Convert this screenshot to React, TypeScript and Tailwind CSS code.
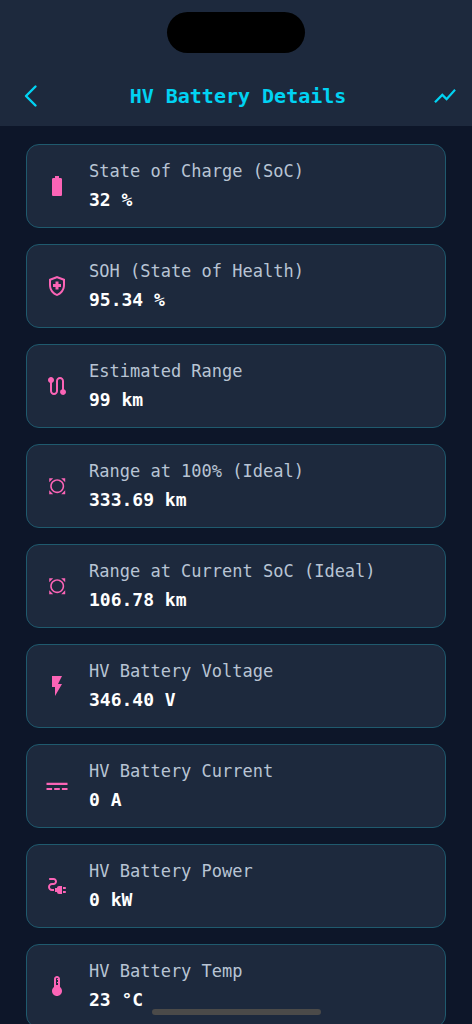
import type { ComponentType } from "react";
import {
  MdAllOut,
  MdBatteryFull,
  MdDeviceThermostat,
  MdElectricalServices,
  MdFlashOn,
  MdOutlineHealthAndSafety,
  MdRoute,
  MdShowChart,
} from "react-icons/md";

type IconProps = { className?: string };

function DirectCurrentIcon({ className }: IconProps) {
  return (
    <svg viewBox="0 0 24 24" fill="currentColor" className={className} aria-hidden="true">
      <path d="M1.5 8.8h21v2.1h-21zM1.5 14h5.6v2.1H1.5zM9.2 14h5.6v2.1H9.2zM16.9 14h5.6v2.1h-5.6z" />
    </svg>
  );
}

type Reading = { label: string; value: string; icon: ComponentType<IconProps> };

const readings: Reading[] = [
  { label: "State of Charge (SoC)", value: "32 %", icon: MdBatteryFull },
  { label: "SOH (State of Health)", value: "95.34 %", icon: MdOutlineHealthAndSafety },
  { label: "Estimated Range", value: "99 km", icon: MdRoute },
  { label: "Range at 100% (Ideal)", value: "333.69 km", icon: MdAllOut },
  { label: "Range at Current SoC (Ideal)", value: "106.78 km", icon: MdAllOut },
  { label: "HV Battery Voltage", value: "346.40 V", icon: MdFlashOn },
  { label: "HV Battery Current", value: "0 A", icon: DirectCurrentIcon },
  { label: "HV Battery Power", value: "0 kW", icon: MdElectricalServices },
  { label: "HV Battery Temp", value: "23 °C", icon: MdDeviceThermostat },
];

function ReadingCard({ label, value, icon: Icon }: Reading) {
  return (
    <li className="flex items-center gap-[20px] rounded-[13px] border border-[#1f5a6e] bg-slate-800 px-[18px] py-[12px]">
      <Icon className="size-[24px] shrink-0 text-pink-400" />
      <dl className="min-w-0">
        <dt className="text-[17px] leading-[28px] text-[#b8c4d4]">{label}</dt>
        <dd className="text-[18px] leading-[30px] font-bold text-white">{value}</dd>
      </dl>
    </li>
  );
}

export default function App() {
  return (
    <div className="relative flex h-screen flex-col overflow-hidden bg-[#0d1629] font-['DejaVu_Sans_Mono',monospace]">
      <header className="shrink-0 bg-slate-800 pt-[12px] pb-[10px]">
        <div className="mx-auto h-[41px] w-[138px] rounded-full bg-black" />
        <div className="mt-[23px] flex h-[40px] items-center justify-between pr-[14px] pl-[18px] text-cyan-400">
          <button type="button" aria-label="Back" className="flex size-[26px] items-center justify-center">
            <svg
              viewBox="0 0 24 24"
              fill="none"
              stroke="currentColor"
              strokeWidth="2.4"
              strokeLinecap="round"
              strokeLinejoin="round"
              className="size-[24px]"
              aria-hidden="true"
            >
              <path d="M16.5 2.5 7 12l9.5 9.5" />
            </svg>
          </button>
          <h1 className="text-[20px] leading-[28px] font-bold">HV Battery Details</h1>
          <button type="button" aria-label="Show chart" className="flex size-[26px] items-center justify-center">
            <MdShowChart className="size-[26px]" />
          </button>
        </div>
      </header>
      <main className="min-h-0 flex-1 overflow-y-auto [scrollbar-width:none]">
        <ul className="flex flex-col gap-[16px] px-[26px] py-[18px]">
          {readings.map((reading) => (
            <ReadingCard key={reading.label} {...reading} />
          ))}
        </ul>
      </main>
      <div className="pointer-events-none absolute inset-x-0 bottom-[9px] flex justify-center">
        <div className="h-[6px] w-[169px] rounded-full bg-[#4b4a49]" />
      </div>
    </div>
  );
}
